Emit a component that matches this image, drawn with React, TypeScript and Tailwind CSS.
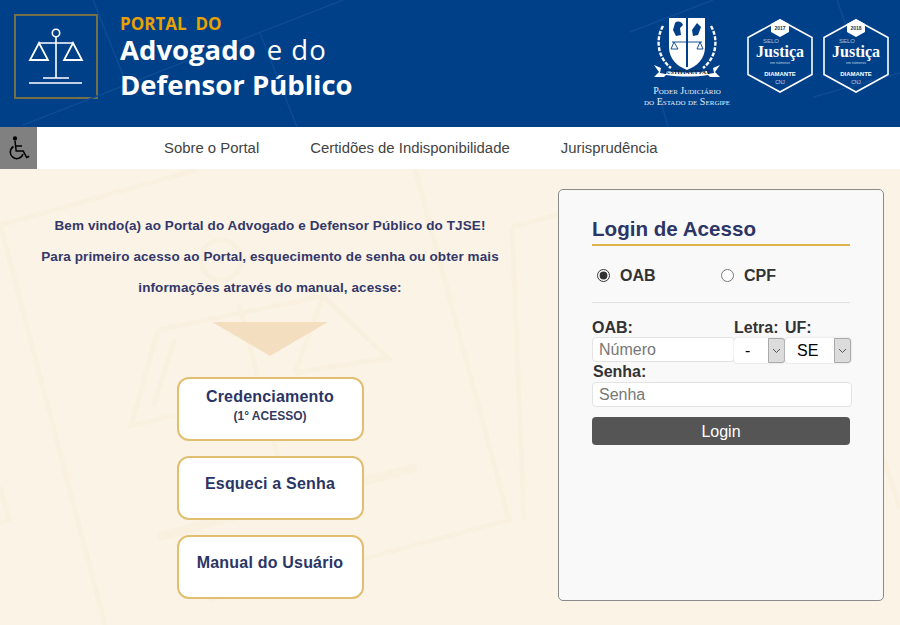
import React from 'react';

const ScaleLogo = () => (
  <div className="flex h-[85px] w-[84px] shrink-0 items-center justify-center border-2 border-[#776f45]">
    <svg width="60" height="60" viewBox="0 0 60 60" fill="none" stroke="#fff" strokeWidth="1.6">
      <circle cx="30" cy="6" r="3.7" />
      <path d="M30 10v41M13 16h34M17 51h26M3 56h53" />
      <path d="M13 16 4 33h18ZM47 16 38 33h18Z" strokeWidth="1.8" />
    </svg>
  </div>
);

const Crest = () => (
  <svg width="66" height="64" viewBox="0 0 66 64">
    <g fill="none" stroke="#fff" strokeWidth="2.4" strokeDasharray="4 1.5">
      <path d="M9 11C1 25 4 43 17 53" />
      <path d="M57 11c8 14 5 32-8 42" />
    </g>
    <path d="M15 3h36v29c0 12-8 19-18 23-10-4-18-11-18-23Z" fill="#fff" />
    <path d="M21 8c3-3 7-1 8 2l-3 3 1 7-5 1-3-6ZM38 15l5-7 4 4-3 8-5 1Z" fill="#004088" />
    <path d="M32 2h2v50h-2Z" fill="#004088" />
    <path d="M18 27h30M20 27l-3 7h7ZM46 27l-3 7h6Z" fill="none" stroke="#004088" strokeWidth=".9" />
    <path d="M0 50l7 3-1 5 6 1 1-3c13 2 27 2 40 0l1 3 6-1-1-5 7-3-5 7 5 5-10 0-2-2c-13 2-27 2-42 0l-2 2-10 0 5-5Z" fill="#fff" />
    <text x="33" y="58.500" textAnchor="middle" fontFamily="Liberation Serif, serif" fontWeight="700" fontSize="5.500" fill="#123">JUSTITIA ET PAX</text>
  </svg>
);

const Badge = ({ year }: { year: string }) => (
  <svg width="66" height="76" viewBox="0 0 66 76">
    <path d="M33 2 65 19.500v37L33 74 1 56.500v-37Z" fill="none" stroke="#fff" strokeWidth="1.6" />
    <path d="M33 1l9 5v8l-9 5-9-5V6Z" fill="#fff" />
    <text x="33" y="12" textAnchor="middle" fontFamily="Liberation Sans, sans-serif" fontWeight="700" fontSize="5" fill="#333">{year}</text>
    <text x="16" y="25" fontFamily="Liberation Sans, sans-serif" fontSize="6" fill="#a9c0dd">SELO</text>
    <text x="33" y="39" textAnchor="middle" fontFamily="Liberation Serif, serif" fontSize="16" fontWeight="700" fill="#fff">Justiça</text>
    <text x="33" y="46" textAnchor="middle" fontFamily="Liberation Sans, sans-serif" fontSize="3.600" fill="#c5d4e8">em números</text>
    <text x="33" y="58" textAnchor="middle" fontFamily="Liberation Sans, sans-serif" fontWeight="700" fontSize="6" fill="#fff">DIAMANTE</text>
    <text x="33" y="66" textAnchor="middle" fontFamily="Liberation Sans, sans-serif" fontSize="5" fill="#c5d4e8">CNJ</text>
  </svg>
);

const Header = () => (
  <header className="relative flex h-[127px] items-start overflow-hidden bg-[#004088] pl-[14px] pt-[14px]">
    <svg className="absolute inset-0" width="900" height="127" fill="none" stroke="#0b4c95" strokeWidth="1.500">
      <path d="M93 0l36 90M343 0 23 125M260 33l37 94M630 32 713 0M837 0l13 37M658 90l10 37M813 97 900 73" />
    </svg>
    <ScaleLogo />
    <div className="relative ml-[22px] mt-[-1px] font-['Open_Sans',sans-serif] text-[27.500px] leading-[35px] text-white">
      <div className="text-[17px] leading-[21px] font-bold text-[#e8a200]">PORTAL&nbsp; DO</div>
      <div className="mt-[-2px] font-bold">Advogado <span className="ml-1 font-normal tracking-[1px]">e do</span></div>
      <div className="font-bold">Defensor Público</div>
    </div>
    <div className="relative ml-auto flex items-start pr-[11px]">
      <div className="mr-[15px] flex w-[90px] flex-col items-center pt-[1px]">
        <Crest />
        <div className="mt-[6px] text-center font-['Liberation_Serif',serif] text-[10px] leading-[11px] text-[#e6edf6] [font-variant:small-caps]">
          <div>Poder Judiciário</div>
          <div className="whitespace-nowrap">do Estado de Sergipe</div>
        </div>
      </div>
      <div className="flex gap-[10px] pt-[4px]">
        <Badge year="2017" />
        <Badge year="2018" />
      </div>
    </div>
  </header>
);

const Nav = () => (
  <nav className="flex h-[42px] items-center bg-white font-['Liberation_Sans',sans-serif] text-[14.900px] text-[#444]">
    <div className="flex h-full w-[37px] items-center justify-center bg-[#808080]">
      <svg width="24" height="24" viewBox="0 0 24 24" fill="none" stroke="#000" strokeWidth="1.500">
        <circle cx="8" cy="2.500" r="1.400" fill="#000" />
        <path d="M8 5l1.200 10h7l3.500 6.500 2.500-1.200M9 10h6" />
        <path d="M6.500 10.500a6.500 6.500 0 1 0 9.500 7.500" />
      </svg>
    </div>
    <div className="ml-[127px] flex gap-[51px]">
      <a>Sobre o Portal</a>
      <a>Certidões de Indisponibilidade</a>
      <a>Jurisprudência</a>
    </div>
  </nav>
);

const Watermark = () => (
  <svg className="absolute inset-0" width="900" height="456" fill="none" stroke="#f9f0e0" strokeWidth="5">
    <path d="M0 56 196 1M1 58l104 398M415 0l94 351-299 80" />
    <path d="M512 58 560 45M512 58l12 293M0 318l9 33-9 3M884 290l16 50" />
    <circle cx="221" cy="91" r="20" />
    <path d="M239 134l42 167M158 161l165-34 65 62-93 15M158 161l-27 96 82-20M175 170l-22 68M323 127l-28 77" />
    <path d="M158 368 417 298" strokeWidth="9" />
  </svg>
);

const actions = [
  { title: 'Credenciamento', sub: '(1° ACESSO)' },
  { title: 'Esqueci a Senha' },
  { title: 'Manual do Usuário' },
];

const Welcome = () => (
  <section className="flex w-[540px] shrink-0 flex-col items-center pt-[21px] font-['Liberation_Sans',sans-serif] text-[#33386a]">
    <div className="h-[93px] text-center text-[13.500px] leading-[31px] font-bold tracking-[0.1px]">
      <p>Bem vindo(a) ao Portal do Advogado e Defensor Público do TJSE!</p>
      <p>Para primeiro acesso ao Portal, esquecimento de senha ou obter mais</p>
      <p>informações através do manual, acesse:</p>
    </div>
    <div className="mt-[19px] h-0 w-0 border-x-[58px] border-t-[34px] border-x-transparent border-t-[#f3dfc0]" />
    <div className="mt-[21px] flex flex-col gap-[15px]">
      {actions.map((action) => (
        <button
          key={action.title}
          className={`flex h-[64px] w-[187px] flex-col items-center rounded-[12px] border-2 border-[#e0bf70] bg-white text-[16px] leading-[24px] font-bold tracking-[0.2px] text-[#2a3566] ${action.sub ? 'pt-[6px]' : 'pt-[14px]'}`}
        >
          {action.title}
          {action.sub && <span className="text-[12px] leading-[14px] tracking-normal text-[#333a60]">{action.sub}</span>}
        </button>
      ))}
    </div>
  </section>
);

const SelectBox = ({ value, className, pad }: { value: string; className: string; pad: string }) => (
  <div className={`flex h-[25px] items-stretch rounded-[4px] bg-white shadow-[0_0_2px_#ccc] ${className}`}>
    <span className={`flex-1 text-[16px] leading-[26px] text-black ${pad}`}>{value}</span>
    <span className="flex w-[17px] items-center justify-center rounded-r-[3px] border border-[#aaa] bg-[#dcdcdc]">
      <svg width="9" height="6" viewBox="0 0 9 6" fill="none" stroke="#555" strokeWidth="1">
        <path d="M1 1l3.500 3.500L8 1" />
      </svg>
    </span>
  </div>
);

const LoginCard = () => (
  <section className="ml-[18px] h-[412px] w-[326px] rounded-[5px] border border-[#8a8a8a] bg-[#f9f9f9] pl-[33px] pr-[33px] pt-[25px] font-['Liberation_Sans',sans-serif]">
    <h2 className="border-b-2 border-[#e0b44c] pb-[2px] text-[20.600px] leading-[27px] font-bold text-[#2b3566]">Login de Acesso</h2>
    <div className="mt-[20px] flex h-[19px] items-center pl-[5px] text-[16px] font-bold text-[#333]">
      <label className="flex w-[124px] items-center gap-[10px]">
        <input type="radio" name="tipo" defaultChecked className="m-0 h-[13px] w-[13px] accent-[#333]" /> OAB
      </label>
      <label className="flex items-center gap-[10px]">
        <input type="radio" name="tipo" className="m-0 h-[13px] w-[13px]" /> CPF
      </label>
    </div>
    <div className="mt-[17px] border-t border-[#e2e2e2]" />
    <div className="mt-[16px] w-[260px] text-[16px] font-bold text-[#333]">
      <div className="flex h-[18px] leading-[18px]">
        <span className="w-[142px]">OAB:</span>
        <span className="w-[51px]">Letra:</span>
        <span>UF:</span>
      </div>
      <div className="flex items-start font-normal">
        <input placeholder="Número" className="h-[25px] w-[143px] rounded-[4px] border border-[#e3e3e3] bg-white pl-[6px] text-[16px] placeholder:text-[#777]" />
        <SelectBox value="-" pad="pl-[11px]" className="ml-[-1px] mt-[1px] w-[51px]" />
        <SelectBox value="SE" pad="pl-[12px]" className="mt-[1px] w-[66px]" />
      </div>
      <div className="mt-[-1px] h-[20px] pl-[1px] leading-[20px]">Senha:</div>
      <input placeholder="Senha" className="h-[25px] w-[260px] rounded-[4px] border border-[#e3e3e3] bg-white pl-[6px] text-[16px] font-normal placeholder:text-[#777]" />
    </div>
    <button className="mt-[10px] h-[28px] w-[258px] rounded-[4px] bg-[#555] pt-[1px] text-[16px] text-white">Login</button>
  </section>
);

export default function App() {
  return (
    <div className="h-[625px] w-[900px] overflow-hidden bg-[#fbf3e6]">
      <Header />
      <Nav />
      <main className="relative flex h-[456px]">
        <Watermark />
        <div className="relative flex pt-[20px]">
          <Welcome />
          <LoginCard />
        </div>
      </main>
    </div>
  );
}
